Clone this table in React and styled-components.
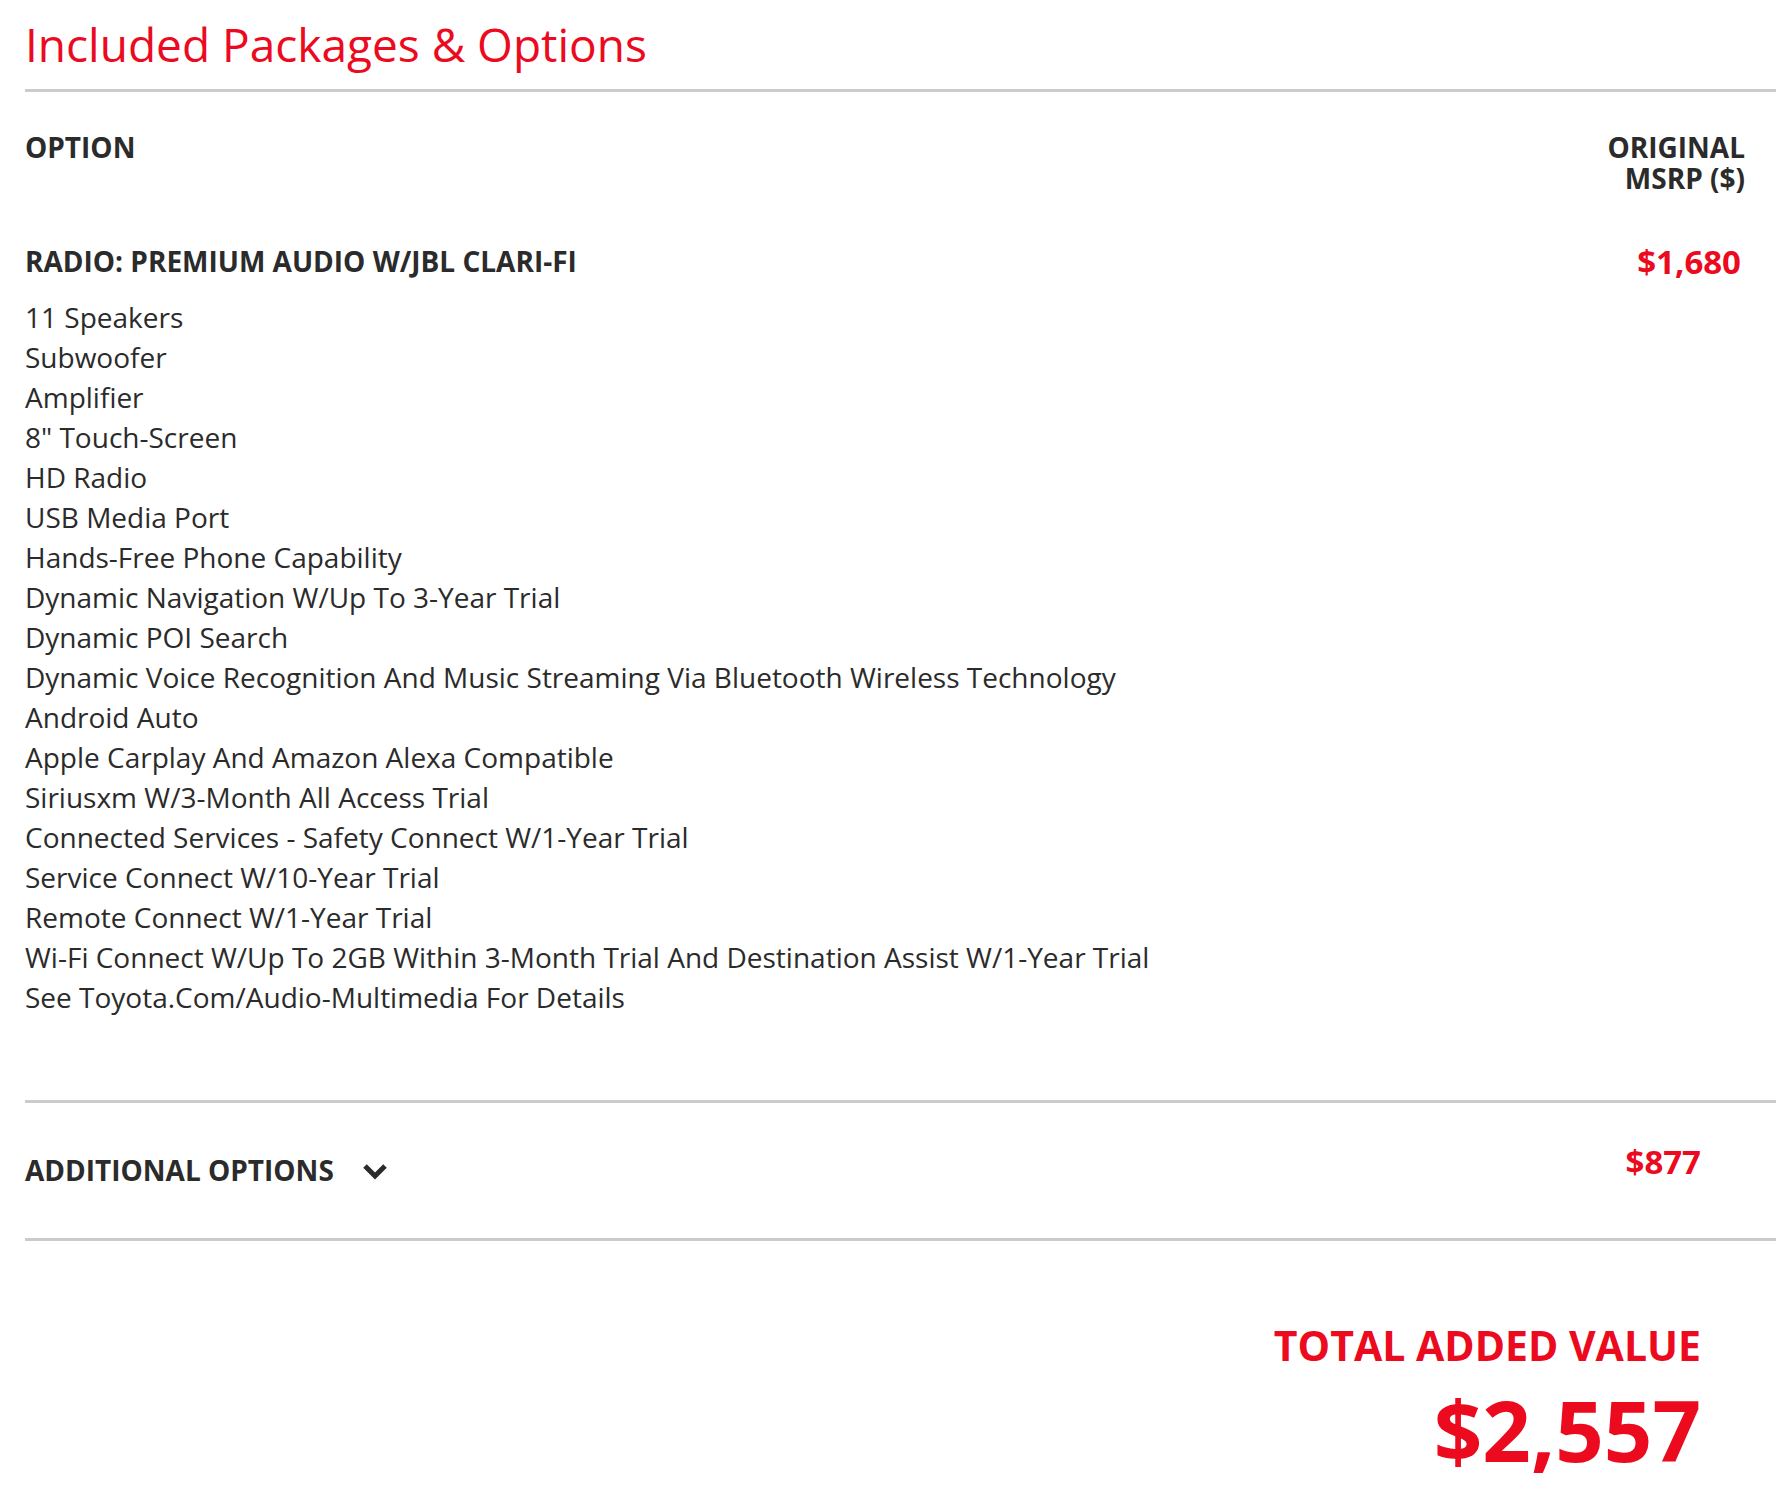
import React from 'react';
import styled, { createGlobalStyle } from 'styled-components';

const GlobalStyle = createGlobalStyle`
    body {
        margin: 0;
        background: #fff;
        overflow: hidden;
        font-family: 'Open Sans', 'Liberation Sans', sans-serif;
        color: #2b2b2b;
    }
`;

const Wrapper = styled.div`
    padding: 14px 0 40px 25px;
`;

const Title = styled.h1`
    margin: 0 0 15px;
    font-size: 46px;
    line-height: 60px;
    font-weight: 400;
    color: #eb0a1e;
`;

const Section = styled.div`
    border-top: 3px solid #cbcbcb;
`;

const HeadRow = styled.div`
    display: flex;
    justify-content: space-between;
    align-items: flex-start;
    padding: 40px 31px 0 0;
`;

const HeadLabel = styled.div`
    font-size: 28px;
    line-height: 31px;
    font-weight: 700;
    text-transform: uppercase;
    text-align: ${props => (props.right ? 'right' : 'left')};
`;

const PackageRow = styled.div`
    display: flex;
    justify-content: space-between;
    align-items: center;
    margin-top: 52px;
    padding-right: 35px;
`;

const PackageName = styled.div`
    font-size: 28px;
    line-height: 31px;
    font-weight: 700;
`;

const Price = styled.div`
    font-size: ${props => props.size || 33}px;
    line-height: 31px;
    font-weight: 700;
    color: #eb0a1e;
`;

const Items = styled.ul`
    list-style: none;
    margin: 20px 0 83px;
    padding: 0;
`;

const Item = styled.li`
    font-size: 28px;
    line-height: 40px;
`;

const ToggleRow = styled.div`
    display: flex;
    justify-content: space-between;
    align-items: flex-start;
    padding: 43px 75px 52px 0;
`;

const Toggle = styled.button`
    display: flex;
    align-items: center;
    gap: 28px;
    margin-top: 9px;
    padding: 0;
    border: 0;
    background: none;
    font-family: inherit;
    font-size: 28px;
    line-height: 31px;
    font-weight: 700;
    color: #2b2b2b;
    cursor: pointer;
`;

const Total = styled.div`
    display: flex;
    flex-direction: column;
    align-items: flex-end;
    padding: 79px 75px 0 0;
    color: #eb0a1e;
    font-weight: 700;
`;

const TotalLabel = styled.div`
    font-size: 41px;
    line-height: 50px;
`;

const TotalValue = styled.div`
    margin-top: 14px;
    font-size: 85px;
    line-height: 90px;
`;

const features = [
    '11 Speakers',
    'Subwoofer',
    'Amplifier',
    '8" Touch-Screen',
    'HD Radio',
    'USB Media Port',
    'Hands-Free Phone Capability',
    'Dynamic Navigation W/Up To 3-Year Trial',
    'Dynamic POI Search',
    'Dynamic Voice Recognition And Music Streaming Via Bluetooth Wireless Technology',
    'Android Auto',
    'Apple Carplay And Amazon Alexa Compatible',
    'Siriusxm W/3-Month All Access Trial',
    'Connected Services - Safety Connect W/1-Year Trial',
    'Service Connect W/10-Year Trial',
    'Remote Connect W/1-Year Trial',
    'Wi-Fi Connect W/Up To 2GB Within 3-Month Trial And Destination Assist W/1-Year Trial',
    'See Toyota.Com/Audio-Multimedia For Details',
];

const Chevron = () => (
    <svg width="26" height="18" viewBox="0 0 26 18">
        <polyline
            points="3,4 13,14 23,4"
            fill="none"
            stroke="#2b2b2b"
            strokeWidth="5"
        />
    </svg>
);

const App = () => {
    return (
        <Wrapper>
            <GlobalStyle />
            <Title>Included Packages &amp; Options</Title>
            <Section>
                <HeadRow>
                    <HeadLabel>Option</HeadLabel>
                    <HeadLabel right>
                        Original
                        <br />
                        MSRP ($)
                    </HeadLabel>
                </HeadRow>
                <PackageRow>
                    <PackageName>RADIO: PREMIUM AUDIO W/JBL CLARI-FI</PackageName>
                    <Price>$1,680</Price>
                </PackageRow>
                <Items>
                    {features.map(f => (
                        <Item key={f}>{f}</Item>
                    ))}
                </Items>
            </Section>
            <Section>
                <ToggleRow>
                    <Toggle>
                        ADDITIONAL OPTIONS
                        <Chevron />
                    </Toggle>
                    <Price size={33}>$877</Price>
                </ToggleRow>
            </Section>
            <Section>
                <Total>
                    <TotalLabel>TOTAL ADDED VALUE</TotalLabel>
                    <TotalValue>$2,557</TotalValue>
                </Total>
            </Section>
        </Wrapper>
    );
};

export default App;
